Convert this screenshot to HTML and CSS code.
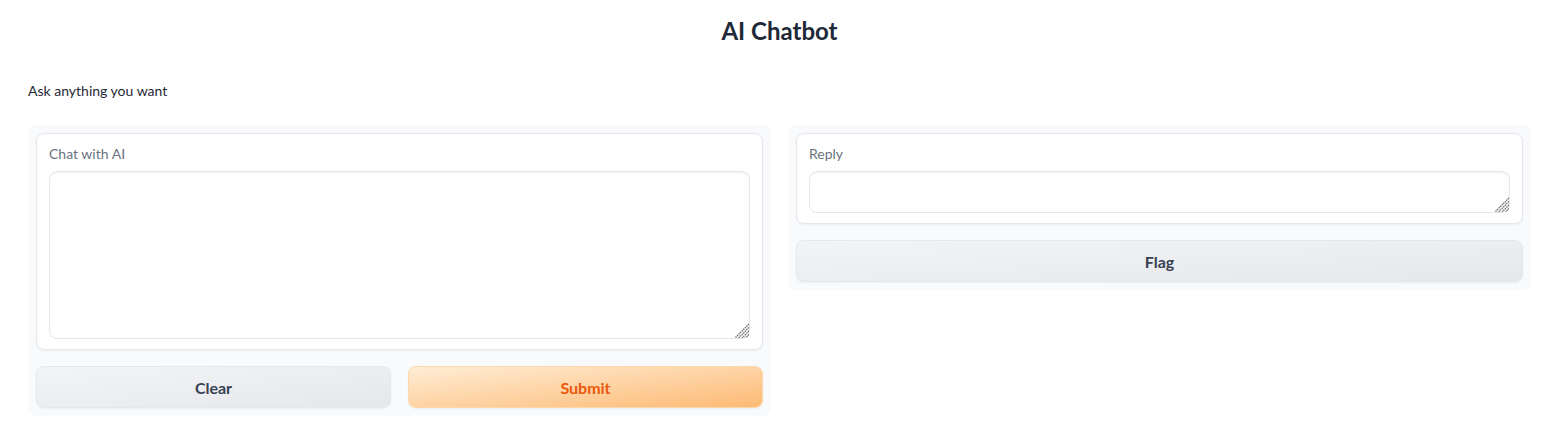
FILE: index.html
```html
<!DOCTYPE html>
<html>
<head>
<meta charset="utf-8">
<link rel="stylesheet" href="styles.css">
</head>
<body>
<div class="app">
  <h1 class="title">AI Chatbot</h1>
  <p class="desc">Ask anything you want</p>
  <div class="row">
    <div class="panel">
      <div class="block">
        <label class="label">Chat with AI</label>
        <div class="field">
          <textarea class="input tall"></textarea>
          <svg class="grip" width="15" height="15" viewBox="0 0 15 15"><g stroke="#6b6b6b" stroke-width="1.3" stroke-dasharray="1.5 0.7"><line x1="15" y1="1" x2="1" y2="15"/><line x1="15" y1="4.5" x2="4.5" y2="15"/><line x1="15" y1="8" x2="8" y2="15"/><line x1="15" y1="11.5" x2="11.5" y2="15"/></g></svg>
        </div>
      </div>
      <div class="btns">
        <button class="btn secondary">Clear</button>
        <button class="btn primary">Submit</button>
      </div>
    </div>
    <div class="panel">
      <div class="block">
        <label class="label">Reply</label>
        <div class="field">
          <textarea class="input short"></textarea>
          <svg class="grip" width="15" height="15" viewBox="0 0 15 15"><g stroke="#6b6b6b" stroke-width="1.3" stroke-dasharray="1.5 0.7"><line x1="15" y1="1" x2="1" y2="15"/><line x1="15" y1="4.5" x2="4.5" y2="15"/><line x1="15" y1="8" x2="8" y2="15"/><line x1="15" y1="11.5" x2="11.5" y2="15"/></g></svg>
        </div>
      </div>
      <button class="btn secondary single">Flag</button>
    </div>
  </div>
</div>
</body>
</html>
```

FILE: styles.css
```css
* { box-sizing: border-box; }
body {
  margin: 0;
  background: #ffffff;
  font-family: Lato, "Noto Sans", "Liberation Sans", sans-serif;
  color: #1f2937;
}
.app {
  padding: 0 20px 0 28px;
}
.title {
  margin: 0;
  padding-top: 16px;
  text-align: center;
  font-size: 24px;
  line-height: 30px;
  font-weight: 700;
  color: #1f2937;
}
.desc {
  margin: 35px 0 0 0;
  font-size: 14px;
  line-height: 20px;
  color: #1f2937;
}
.row {
  margin-top: 24px;
  display: flex;
  gap: 17px;
  align-items: flex-start;
}
.panel {
  flex: 1;
  background: #f9fafb;
  border-radius: 8px;
  padding: 8px;
  display: flex;
  flex-direction: column;
  gap: 16px;
}
.block {
  background: #ffffff;
  border: 1px solid #e5e7eb;
  border-radius: 8px;
  padding: 10px 12px;
  box-shadow: 0 1px 2px rgba(0,0,0,0.05);
  display: flex;
  flex-direction: column;
}
.label {
  font-size: 14px;
  line-height: 20px;
  color: #6b7280;
  margin-bottom: 7px;
}
.field {
  position: relative;
}
.input {
  display: block;
  width: 100%;
  border: 1px solid #e5e7eb;
  border-radius: 8px;
  background: #ffffff;
  box-shadow: inset 0 1px 2px rgba(0,0,0,0.05);
  resize: none;
  font-family: inherit;
  font-size: 14px;
  padding: 8px 12px;
  outline: none;
}
.grip {
  position: absolute;
  right: 1px;
  bottom: 1px;
  pointer-events: none;
}
.tall { height: 168px; }
.short { height: 42px; }
.btns {
  display: flex;
  gap: 17px;
}
.btn {
  flex: 1;
  height: 42px;
  border-radius: 8px;
  font-family: inherit;
  font-size: 16px;
  font-weight: 700;
  cursor: pointer;
  box-shadow: 0 1px 2px rgba(0,0,0,0.05);
}
.single { flex: none; }
.secondary {
  background: linear-gradient(to bottom right, #f3f4f6, #e5e7eb);
  border: 1px solid #e5e7eb;
  color: #374151;
}
.primary {
  background: linear-gradient(to bottom right, #ffedd5, #fdba74);
  border: 1px solid #fed7aa;
  color: #ea580c;
}
```
